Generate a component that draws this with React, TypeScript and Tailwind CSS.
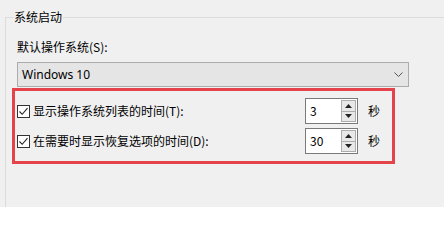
import React from "react";

const font = { fontFamily: '"Noto Sans CJK SC", "Noto Sans", sans-serif' };

function Check() {
  return (
    <span className="flex h-[13px] w-[13px] shrink-0 items-center justify-center border border-[#333] bg-white">
      <svg width="11" height="11" viewBox="0 0 11 11">
        <path d="M1.5 5.5 L4.2 8.3 L9.5 2.2" fill="none" stroke="#222" strokeWidth="1.1" />
      </svg>
    </span>
  );
}

function Spin({ value }: { value: string }) {
  return (
    <div className="flex h-[26px] w-[53px] shrink-0 border border-[#7a7a7a] bg-white">
      <div className="flex flex-1 items-center pl-[4px] text-[12px] text-black">{value}</div>
      <div className="my-[1px] mr-[1px] flex w-[15px] flex-col border border-[#adadad] bg-[#e8e8e8]">
        <div className="flex flex-1 items-center justify-center border-b border-[#adadad]">
          <svg width="7" height="4" viewBox="0 0 7 4">
            <path d="M0 4 L3.5 0 L7 4 Z" fill="#222" />
          </svg>
        </div>
        <div className="flex flex-1 items-center justify-center">
          <svg width="7" height="4" viewBox="0 0 7 4">
            <path d="M0 0 L3.5 4 L7 0 Z" fill="#222" />
          </svg>
        </div>
      </div>
    </div>
  );
}

function Row({ label, value }: { label: string; value: string }) {
  return (
    <div className="flex items-center pl-[2px] pr-[12px]">
      <Check />
      <span className="ml-[3px] flex-1 text-[12px] leading-4 text-black">{label}</span>
      <Spin value={value} />
      <span className="ml-[10px] text-[12px] leading-4 text-black">秒</span>
    </div>
  );
}

export default function App() {
  return (
    <div className="h-[207px] w-[444px] overflow-hidden bg-[#f0f0f0]" style={font}>
      <fieldset className="ml-[5px] mt-[9px] h-[260px] w-[460px] border-l border-t border-[#dcdcdc]">
        <legend className="ml-[7px] px-[1px] text-[12px] leading-4 text-black">系统启动</legend>
        <div className="pl-[11px]">
          <div className="mt-[14px] text-[12px] leading-4 text-black">默认操作系统(S):</div>
          <div className="mt-[7px] flex h-[25px] w-[392px] items-center justify-between border border-[#acacac] bg-[#e5e5e5] pl-[4px] pr-[5px]">
            <span className="text-[12px] text-black" style={{ fontFamily: '"Noto Sans", sans-serif' }}>
              Windows 10
            </span>
            <svg width="9" height="5" viewBox="0 0 9 5">
              <path d="M0.5 0.5 L4.5 4.5 L8.5 0.5" fill="none" stroke="#555" strokeWidth="1" />
            </svg>
          </div>
          <div className="-ml-[5px] mt-[1px] flex w-[383px] flex-col gap-[4px] border-[3px] border-[#e5434a] py-[7px]">
            <Row label="显示操作系统列表的时间(T):" value="3" />
            <Row label="在需要时显示恢复选项的时间(D):" value="30" />
          </div>
        </div>
      </fieldset>
    </div>
  );
}
